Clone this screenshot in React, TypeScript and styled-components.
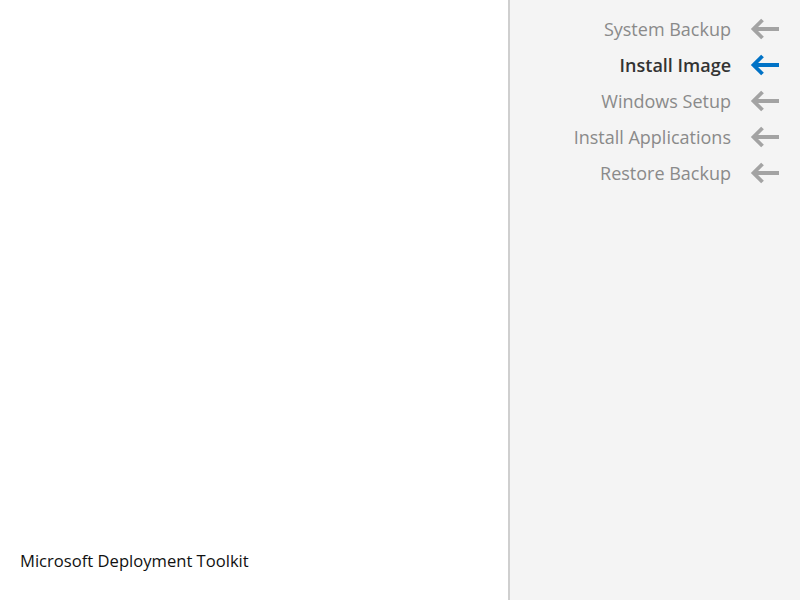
import styled, { createGlobalStyle } from 'styled-components';

const GlobalStyle = createGlobalStyle`
  html, body, #root {
    margin: 0;
    padding: 0;
    height: 100%;
  }
  body {
    font-family: "Open Sans", "Noto Sans", sans-serif;
    background: #ffffff;
  }
`;

type Step = { label: string; active?: boolean };

const steps: Step[] = [
  { label: 'System Backup' },
  { label: 'Install Image', active: true },
  { label: 'Windows Setup' },
  { label: 'Install Applications' },
  { label: 'Restore Backup' },
];

const ArrowIcon = ({ color }: { color: string }) => (
  <svg width="29" height="22" viewBox="0 0 29 22">
    <path
      d="M29 11 H4 M12.5 2 L3.5 11 L12.5 20"
      fill="none"
      stroke={color}
      strokeWidth="3.8"
      strokeLinejoin="miter"
    />
  </svg>
);

const App = () => {
  return (
    <>
      <GlobalStyle />
      <Layout>
        <Main>
          <Footer>Microsoft Deployment Toolkit</Footer>
        </Main>
        <Sidebar>
          <StepList>
            {steps.map((s) => (
              <StepRow key={s.label}>
                <StepLabel $active={!!s.active}>{s.label}</StepLabel>
                <ArrowIcon color={s.active ? '#0072c6' : '#a3a3a3'} />
              </StepRow>
            ))}
          </StepList>
        </Sidebar>
      </Layout>
    </>
  );
};

const Layout = styled.div`
  display: flex;
  width: 800px;
  height: 600px;
  overflow: hidden;
`;

const Main = styled.div`
  width: 508px;
  display: flex;
  flex-direction: column;
  justify-content: flex-end;
  padding: 0 0 27px 20px;
  box-sizing: border-box;
`;

const Footer = styled.div`
  font-size: 16.6px;
  color: #111111;
  line-height: 24px;
`;

const Sidebar = styled.div`
  flex: 1;
  background: #f4f4f4;
  border-left: 2px solid #cfcfcf;
  padding: 11px 21px 0 0;
`;

const StepList = styled.div`
  display: flex;
  flex-direction: column;
`;

const StepRow = styled.div`
  display: flex;
  align-items: center;
  justify-content: flex-end;
  gap: 19px;
  height: 36px;
`;

const StepLabel = styled.span<{ $active: boolean }>`
  font-size: 18px;
  color: ${({ $active }) => ($active ? '#333333' : '#8a8a8a')};
  font-weight: ${({ $active }) => ($active ? 600 : 400)};
`;

export default App;
